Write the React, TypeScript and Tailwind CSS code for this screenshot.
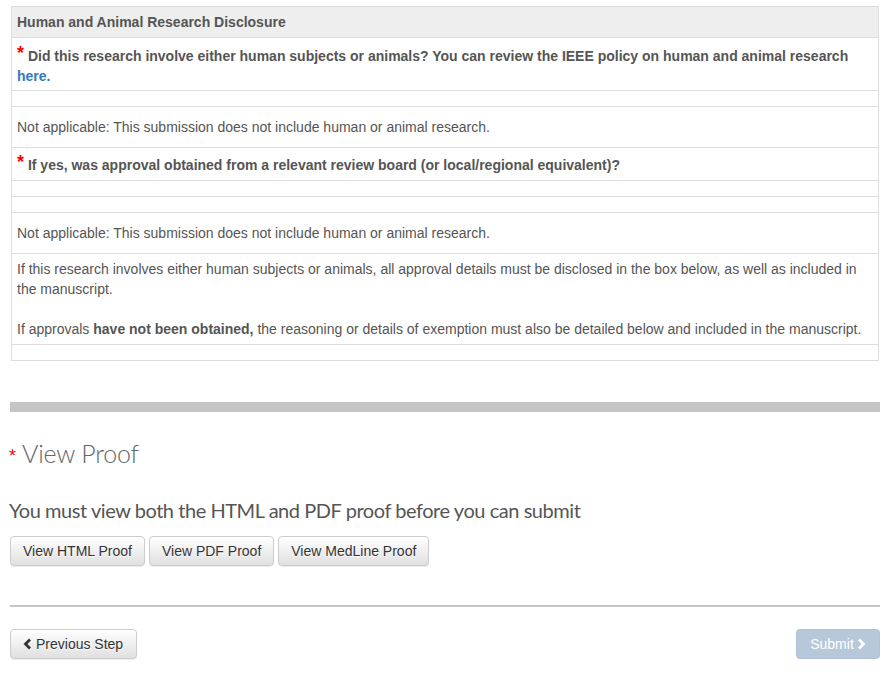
import React from "react";

function Star({ className = "" }: { className?: string }) {
  return <span className={`text-[#ff0000] ${className}`}>*</span>;
}

function ChevronLeft() {
  return (
    <svg width="9" height="12" viewBox="0 0 9 12" className="inline-block">
      <polyline points="7,1.5 2.5,6 7,10.5" fill="none" stroke="currentColor" strokeWidth="2.8" />
    </svg>
  );
}

function ChevronRight() {
  return (
    <svg width="9" height="12" viewBox="0 0 9 12" className="inline-block">
      <polyline points="2,1.5 6.5,6 2,10.5" fill="none" stroke="currentColor" strokeWidth="2.8" />
    </svg>
  );
}

const btn =
  "h-[30px] px-[12px] rounded-[4px] border border-[#ccc] bg-gradient-to-b from-white to-[#e0e0e0] text-[#333] text-[14px] leading-[20px] shadow-[0_1px_1px_rgba(0,0,0,0.075)] [text-shadow:0_1px_0_#fff] flex items-center";

export default function App() {
  return (
    <div className="w-[893px] h-[689px] bg-white overflow-hidden font-['Liberation_Sans',Arial,sans-serif] text-[14px] leading-[20px] text-[#555]">
      {/* Table */}
      <div className="ml-[11px] mt-[6px] w-[868px] border border-[#ddd]">
        <div className="h-[31px] bg-[#eee] px-[5px] flex items-center font-bold border-b border-[#ddd]">
          Human and Animal Research Disclosure
        </div>
        <div className="h-[53px] px-[5px] pt-[7px] pb-[5px] font-bold border-b border-[#ddd]">
          <Star className="text-[18px] relative top-[-2px]" /> Did this research involve either human subjects or animals? You can
          review the IEEE policy on human and animal research <span className="text-[#337ab7]">here.</span>
        </div>
        <div className="h-[16px] border-b border-[#ddd]" />
        <div className="h-[41px] px-[5px] flex items-center border-b border-[#ddd]">
          Not applicable: This submission does not include human or animal research.
        </div>
        <div className="h-[33px] px-[5px] flex items-center font-bold border-b border-[#ddd]">
          <span>
            <Star className="text-[18px] relative top-[-2px]" /> If yes, was approval obtained from a relevant review board (or
            local/regional equivalent)?
          </span>
        </div>
        <div className="h-[16px] border-b border-[#ddd]" />
        <div className="h-[16px] border-b border-[#ddd]" />
        <div className="h-[41px] px-[5px] flex items-center border-b border-[#ddd]">
          Not applicable: This submission does not include human or animal research.
        </div>
        <div className="h-[91px] px-[5px] py-[5px] border-b border-[#ddd]">
          <p className="mb-[20px]">
            If this research involves either human subjects or animals, all approval details must be disclosed in the box
            below, as well as included in the manuscript.
          </p>
          <p>
            If approvals <b>have not been obtained,</b> the reasoning or details of exemption must also be detailed below and
            included in the manuscript.
          </p>
        </div>
        <div className="h-[15px]" />
      </div>

      {/* Gray divider */}
      <div className="ml-[10px] mt-[41px] w-[870px] h-[10px] bg-[#c5c5c5]" />

      {/* View Proof */}
      <div className="ml-[9px] mt-[28px] h-[26px] flex items-center">
        <span className="text-[#ff0000] text-[18px] leading-none relative top-[3px] mr-[6px] font-['Liberation_Sans',Arial,sans-serif]">*</span>
        <span className="font-['Lato',sans-serif] font-light text-[25px] leading-[26px] tracking-[-0.2px] text-[#666]">View Proof</span>
      </div>

      <div className="ml-[9px] mt-[32px] font-['Lato',sans-serif] text-[20px] leading-[24px] tracking-[-0.45px] text-[#555]">
        You must view both the HTML and PDF proof before you can submit
      </div>

      <div className="ml-[10px] mt-[14px] flex gap-[4px]">
        <button className={btn}>View HTML Proof</button>
        <button className={btn}>View PDF Proof</button>
        <button className={btn}>View MedLine Proof</button>
      </div>

      {/* Bottom divider */}
      <div className="ml-[10px] mt-[39px] w-[870px] h-[2px] bg-[#c5c5c5]" />

      <div className="ml-[10px] mt-[22px] w-[870px] flex justify-between">
        <button className={`${btn} gap-[4px] w-[127px]`}>
          <ChevronLeft />
          Previous Step
        </button>
        <button className="h-[30px] w-[84px] rounded-[4px] border border-[#b0c2d5] bg-[#b7c8da] text-white text-[14px] leading-[20px] flex items-center justify-center gap-[3px]">
          Submit
          <ChevronRight />
        </button>
      </div>
    </div>
  );
}
